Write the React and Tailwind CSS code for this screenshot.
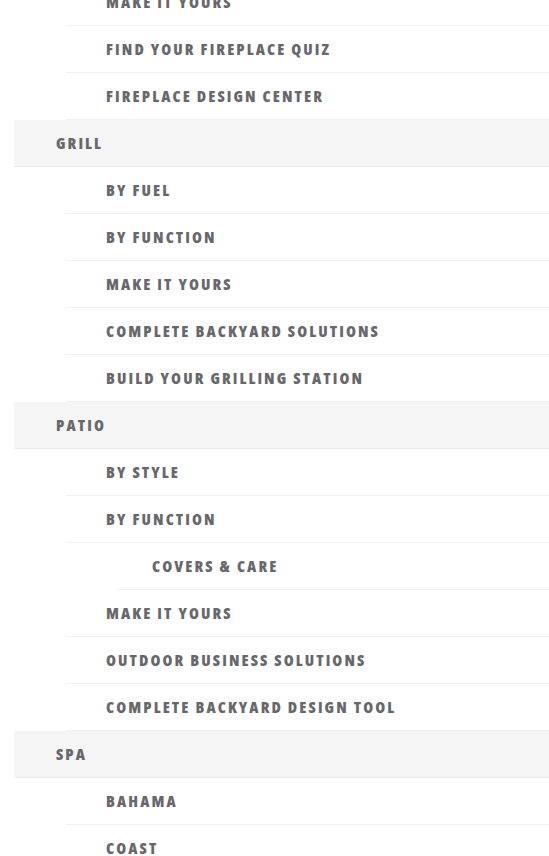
import React from "react";

const rows = [
  { t: "MAKE IT YOURS", l: 1 },
  { t: "FIND YOUR FIREPLACE QUIZ", l: 1 },
  { t: "FIREPLACE DESIGN CENTER", l: 1 },
  { t: "GRILL", l: 0 },
  { t: "BY FUEL", l: 1 },
  { t: "BY FUNCTION", l: 1 },
  { t: "MAKE IT YOURS", l: 1 },
  { t: "COMPLETE BACKYARD SOLUTIONS", l: 1 },
  { t: "BUILD YOUR GRILLING STATION", l: 1 },
  { t: "PATIO", l: 0 },
  { t: "BY STYLE", l: 1 },
  { t: "BY FUNCTION", l: 1 },
  { t: "COVERS & CARE", l: 2 },
  { t: "MAKE IT YOURS", l: 1 },
  { t: "OUTDOOR BUSINESS SOLUTIONS", l: 1 },
  { t: "COMPLETE BACKYARD DESIGN TOOL", l: 1 },
  { t: "SPA", l: 0 },
  { t: "BAHAMA", l: 1 },
  { t: "COAST", l: 1 },
];

function Row({ t, l }) {
  const base =
    "h-[47px] flex items-center border-b text-[16px] font-extrabold font-stretch-[75%] tracking-[2.1px] text-[#68686c] leading-none";
  if (l === 0)
    return (
      <div className={base + " ml-[14px] pl-[42px] bg-[#f5f5f5] border-[#ebebeb]"}>{t}</div>
    );
  if (l === 1)
    return <div className={base + " ml-[66px] pl-[40px] border-[#f1f1f1]"}>{t}</div>;
  return <div className={base + " ml-[117px] pl-[35px] border-[#f1f1f1]"}>{t}</div>;
}

export default function App() {
  return (
    <div
      className="w-[549px] h-[856px] overflow-hidden bg-white"
      style={{ fontFamily: '"Open Sans", sans-serif' }}
    >
      <div className="-mt-[21px]">
        {rows.map((r, i) => (
          <Row key={i} {...r} />
        ))}
      </div>
    </div>
  );
}
